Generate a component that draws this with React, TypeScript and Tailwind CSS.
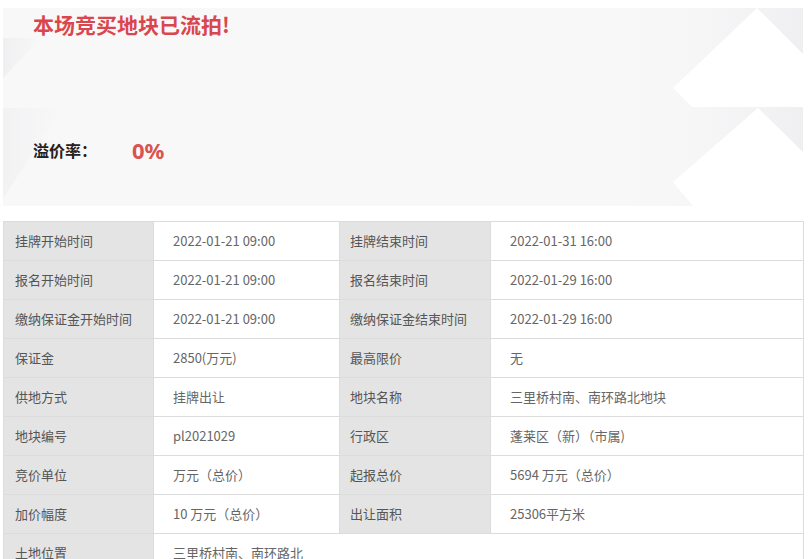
import React from "react";

const rows: [string, string, string, string][] = [
  ["挂牌开始时间", "2022-01-21 09:00", "挂牌结束时间", "2022-01-31 16:00"],
  ["报名开始时间", "2022-01-21 09:00", "报名结束时间", "2022-01-29 16:00"],
  ["缴纳保证金开始时间", "2022-01-21 09:00", "缴纳保证金结束时间", "2022-01-29 16:00"],
  ["保证金", "2850(万元)", "最高限价", "无"],
  ["供地方式", "挂牌出让", "地块名称", "三里桥村南、南环路北地块"],
  ["地块编号", "pl2021029", "行政区", "蓬莱区（新）（市属)"],
  ["竞价单位", "万元（总价）", "起报总价", "5694 万元（总价）"],
  ["加价幅度", "10 万元（总价）", "出让面积", "25306平方米"],
];

const font = { fontFamily: '"Microsoft YaHei", "Noto Sans CJK SC", "Noto Sans", sans-serif' };

export default function App() {
  return (
    <div className="w-[810px] h-[559px] overflow-hidden bg-white" style={font}>
      <div className="relative ml-[3px] mt-[8px] w-[800px] h-[198px] bg-[#f8f8f9] overflow-hidden">
        <svg className="absolute inset-0" width="800" height="198" viewBox="0 0 800 198">
          <defs>
            <linearGradient id="gr" x1="0" y1="0" x2="1" y2="0">
              <stop offset="0" stopColor="#f8f8f9" stopOpacity="0" />
              <stop offset="1" stopColor="#efeff1" stopOpacity="1" />
            </linearGradient>
            <linearGradient id="gl" x1="0" y1="0" x2="1" y2="0">
              <stop offset="0" stopColor="#ececee" />
              <stop offset="1" stopColor="#f8f8f9" />
            </linearGradient>
          </defs>
          <rect x="600" y="0" width="200" height="198" fill="url(#gr)" />
          <polygon points="0,70 38,30 0,30" fill="url(#gl)" opacity="0.7" />
          <polygon points="0,190 60,100 0,100" fill="url(#gl)" opacity="0.5" />
          <polygon points="754,0 670,80 689,99 800,99 800,46" fill="#ffffff" />
          <polygon points="755,100 670,174 690,198 800,198 800,144" fill="#ffffff" />
        </svg>
        <div className="relative">
          <div className="pl-[30px] pt-[2px] text-[21px] leading-[28px] font-bold text-[#d9474d]">
            本场竞买地块已流拍!
          </div>
          <div className="flex items-center pl-[30px] mt-[97px] h-[30px]">
            <span className="w-[99px] text-[16px] font-bold text-[#222]">溢价率：</span>
            <span className="text-[22px] font-bold text-[#d9534f]" style={{ fontFamily: '"Noto Sans", "Open Sans", sans-serif' }}>0%</span>
          </div>
        </div>
      </div>
      <table className="ml-[3px] mt-[15px] w-[800px] border-collapse table-fixed text-[13px]">
        <colgroup>
          <col className="w-[150px]" />
          <col className="w-[186px]" />
          <col className="w-[151px]" />
          <col className="w-[313px]" />
        </colgroup>
        <tbody>
          {rows.map((r, i) => (
            <tr key={i} className="h-[39px]">
              <td className="border border-[#dcdcdc] bg-[#e4e4e4] pl-[11px] text-[#555]">{r[0]}</td>
              <td className="border border-[#dcdcdc] bg-white pl-[19px] text-[#666]">{r[1]}</td>
              <td className="border border-[#dcdcdc] bg-[#e4e4e4] pl-[10px] text-[#555]">{r[2]}</td>
              <td className="border border-[#dcdcdc] bg-white pl-[19px] text-[#666]">{r[3]}</td>
            </tr>
          ))}
          <tr className="h-[39px]">
            <td className="border border-[#dcdcdc] bg-[#e4e4e4] pl-[11px] text-[#555] align-top pt-[9px]">土地位置</td>
            <td colSpan={3} className="border border-[#dcdcdc] bg-white pl-[19px] text-[#666] align-top pt-[9px]">三里桥村南、南环路北</td>
          </tr>
        </tbody>
      </table>
    </div>
  );
}
